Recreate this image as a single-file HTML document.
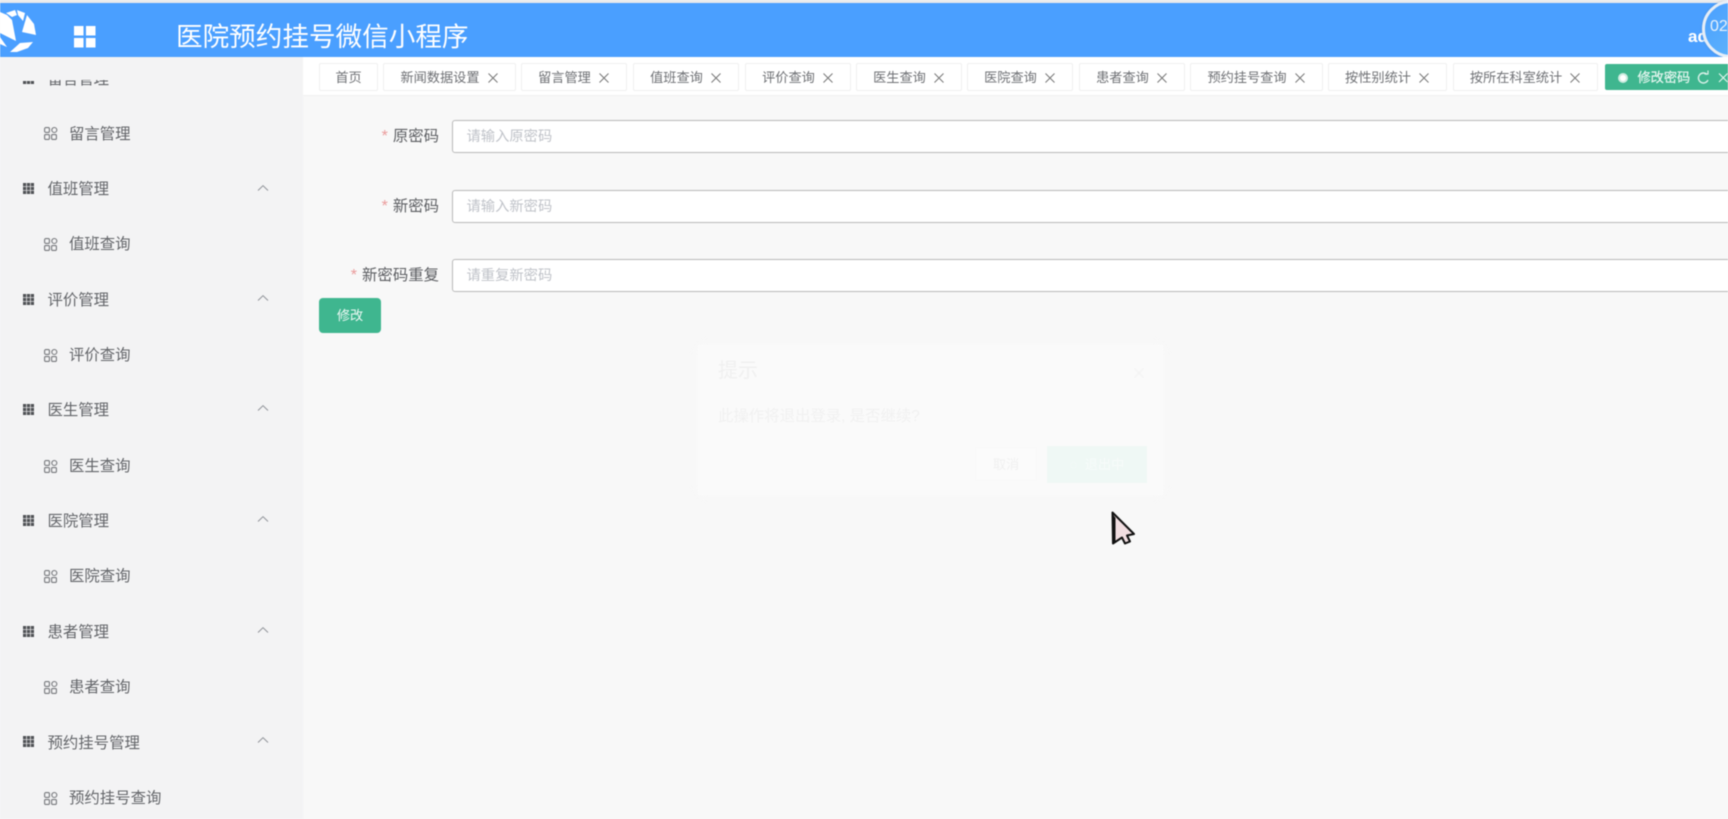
<!DOCTYPE html>
<html lang="zh"><head><meta charset="utf-8"><title>医院预约挂号微信小程序</title>
<style>
html,body{margin:0;padding:0;width:1728px;height:819px;overflow:hidden;background:#f8f8f8}
body{font-family:"Liberation Sans","Noto Sans CJK SC",sans-serif;color:#606266}
#r{position:absolute;left:0;top:0;width:1728px;height:819px;overflow:hidden;filter:blur(.4px)}
.a{position:absolute;white-space:nowrap}
.g,.s{position:absolute;font-size:15.4px;line-height:22px;white-space:nowrap;color:#636569}
.g{left:47.500px}.s{left:69px}
.tab{position:absolute;top:63px;height:26px;background:#fff;border:1px solid #f0f0f0;border-radius:2px;font-size:13.2px;line-height:28px;color:#6f7175;text-align:center;white-space:nowrap;box-sizing:content-box}
.tab i{font-style:normal;display:inline-block;width:12px;height:12px;margin-left:7px;vertical-align:-1.5px}
.tab span{position:relative;left:0}
.lb{position:absolute;font-size:15.4px;line-height:22px;color:#5c5e62;right:1289px;white-space:nowrap}
.lb b{font-weight:normal;color:#ea9a9a;margin-right:5px;font-size:16px;line-height:14px}
.in{position:absolute;left:452px;width:1290px;height:31px;background:#fff;border:1px solid #b9b9b9;border-radius:3px;font-size:14.3px;line-height:33px;color:#c0c3c9;padding-left:13.500px}
</style></head><body>
<div id="r">
<div class="a" style="left:0;top:0;width:1728px;height:3px;background:#e9eaec"></div>
<div class="a" style="left:0;top:57px;width:303px;height:762px;background:#f3f3f4"></div>

<div class="s" style="top:124px;">留言管理</div>
<div class="g" style="top:179px">值班管理</div><div class="s" style="top:234px">值班查询</div>
<div class="g" style="top:290px">评价管理</div><div class="s" style="top:345px">评价查询</div>
<div class="g" style="top:400px">医生管理</div><div class="s" style="top:456px">医生查询</div>
<div class="g" style="top:511px">医院管理</div><div class="s" style="top:566px">医院查询</div>
<div class="g" style="top:622px">患者管理</div><div class="s" style="top:677px">患者查询</div>
<div class="g" style="top:733px">预约挂号管理</div><div class="s" style="top:788px">预约挂号查询</div>
<div class="g" style="top:69px">留言管理</div>
<div class="a" style="left:0;top:57px;width:303px;height:23px;background:#f3f3f4"></div>

<svg class="a" style="left:0;top:0" width="303" height="819" fill="none">
<defs>
<g id="gi"><path fill="#505256" d="M0 0h3.200v3.200H0zM3.900 0h3.200v3.200H3.900zM7.800 0h3.200v3.200H7.800zM0 3.900h3.200v3.200H0zM3.900 3.900h3.200v3.200H3.900zM7.800 3.900h3.200v3.200H7.800zM0 7.800h3.200v3.200H0zM3.900 7.800h3.200v3.200H3.900zM7.800 7.800h3.200v3.200H7.800z"/></g>
<g id="si"><g stroke="#75777b" stroke-width="1.100"><rect x=".6" y=".6" width="4.800" height="4.800" rx="1.200"/><circle cx="10.300" cy="3" r="2.500"/><rect x=".6" y="7.600" width="4.800" height="4.800" rx="1"/><rect x="7.600" y="7.600" width="4.800" height="4.800" rx="1"/></g></g>
<path id="ch" d="M0 5.500L5 .7L10 5.500" stroke="#909399" stroke-width="1"/>
</defs>
<g fill="#505256"><path d="M23 81h3.200v3h-3.200zM26.900 81h3.200v3h-3.200zM30.800 81h3.200v3h-3.200z"/></g>
<use href="#si" x="44" y="127"/>
<use href="#gi" x="23" y="183"/><use href="#ch" x="258" y="185"/><use href="#si" x="44" y="238"/>
<use href="#gi" x="23" y="294"/><use href="#ch" x="258" y="295"/><use href="#si" x="44" y="349"/>
<use href="#gi" x="23" y="404"/><use href="#ch" x="258" y="405"/><use href="#si" x="44" y="460"/>
<use href="#gi" x="23" y="515"/><use href="#ch" x="258" y="516"/><use href="#si" x="44" y="570"/>
<use href="#gi" x="23" y="626"/><use href="#ch" x="258" y="627"/><use href="#si" x="44" y="681"/>
<use href="#gi" x="23" y="736"/><use href="#ch" x="258" y="737"/><use href="#si" x="44" y="792"/>
</svg>

<!-- header -->
<div class="a" style="left:0;top:3px;width:1728px;height:54px;background:#4a9fff"></div>
<svg class="a" style="left:0;top:0" width="100" height="57">
<g fill="#fff">
<path d="M6 13L15 10L17 15L12 17z"/>
<path d="M17 10L25 13L23 21L18 15z"/>
<path d="M0 12L7 15L12 20L16 41L8 37L0 33z"/>
<path d="M27 15L34 24L36 35L22 32z"/>
<path d="M10 52L20 43L33 42L28 48L17 52z"/>
<path d="M0 37L7 47L0 44z"/>
</g>
<g fill="#fff"><rect x="74" y="26" width="9.500" height="9.500"/><rect x="86" y="26" width="9.500" height="9.500"/><rect x="74" y="38" width="9.500" height="9.500"/><rect x="86" y="38" width="9.500" height="9.500"/></g>
</svg>
<div class="a" style="left:176px;top:18px;font-size:26.600px;line-height:38px;color:#fff">医院预约挂号微信小程序</div>
<div class="a" style="left:1688px;top:26px;font-size:17px;line-height:22px;color:#fff;font-weight:bold">ad</div>
<div class="a" style="left:1702px;top:0;width:58px;height:58px;box-sizing:border-box;border-radius:50%;border:3px solid #e6eef7;background:linear-gradient(135deg,#4a9fff,#62b8fb);box-shadow:0 0 2px rgba(90,110,130,.4)"></div>
<div class="a" style="left:1710px;top:16px;font-size:16px;line-height:22px;color:#e6f1fc">02</div>

<!-- tabs bar -->
<div class="a" style="left:303px;top:57px;width:1425px;height:39px;background:#fff;border-bottom:1px solid #f0f0f0;box-sizing:border-box"></div>
<div class="tab" style="left:319px;width:57px"><span>首页</span></div>
<div class="tab" style="left:383px;width:131px"><span>新闻数据设置</span><i><svg width="12" height="12"><path d="M1.500 1.500L10.500 10.500M10.500 1.500L1.500 10.500" stroke="#777" stroke-width="1"/></svg></i></div>
<div class="tab" style="left:521px;width:104px"><span>留言管理</span><i><svg width="12" height="12"><path d="M1.500 1.500L10.500 10.500M10.500 1.500L1.500 10.500" stroke="#777" stroke-width="1"/></svg></i></div>
<div class="tab" style="left:633px;width:104px"><span>值班查询</span><i><svg width="12" height="12"><path d="M1.500 1.500L10.500 10.500M10.500 1.500L1.500 10.500" stroke="#777" stroke-width="1"/></svg></i></div>
<div class="tab" style="left:745px;width:104px"><span>评价查询</span><i><svg width="12" height="12"><path d="M1.500 1.500L10.500 10.500M10.500 1.500L1.500 10.500" stroke="#777" stroke-width="1"/></svg></i></div>
<div class="tab" style="left:856px;width:104px"><span>医生查询</span><i><svg width="12" height="12"><path d="M1.500 1.500L10.500 10.500M10.500 1.500L1.500 10.500" stroke="#777" stroke-width="1"/></svg></i></div>
<div class="tab" style="left:967px;width:104px"><span>医院查询</span><i><svg width="12" height="12"><path d="M1.500 1.500L10.500 10.500M10.500 1.500L1.500 10.500" stroke="#777" stroke-width="1"/></svg></i></div>
<div class="tab" style="left:1079px;width:104px"><span>患者查询</span><i><svg width="12" height="12"><path d="M1.500 1.500L10.500 10.500M10.500 1.500L1.500 10.500" stroke="#777" stroke-width="1"/></svg></i></div>
<div class="tab" style="left:1190px;width:131px"><span>预约挂号查询</span><i><svg width="12" height="12"><path d="M1.500 1.500L10.500 10.500M10.500 1.500L1.500 10.500" stroke="#777" stroke-width="1"/></svg></i></div>
<div class="tab" style="left:1328px;width:117px"><span>按性别统计</span><i><svg width="12" height="12"><path d="M1.500 1.500L10.500 10.500M10.500 1.500L1.500 10.500" stroke="#777" stroke-width="1"/></svg></i></div>
<div class="tab" style="left:1453px;width:143px"><span>按所在科室统计</span><i><svg width="12" height="12"><path d="M1.500 1.500L10.500 10.500M10.500 1.500L1.500 10.500" stroke="#777" stroke-width="1"/></svg></i></div>
<div class="a" style="left:1605px;top:64px;width:130px;height:26px;background:#3fb68f;border-radius:2px"></div>
<svg class="a" style="left:1605px;top:64px" width="123" height="26" fill="none">
<circle cx="18" cy="14" r="5" fill="#cdebe0"/><circle cx="18" cy="14" r="3" fill="#fff"/>
<path d="M102 10.500A5 5 0 1 0 103 16" stroke="#d9f0e8" stroke-width="1.400"/><path d="M99.500 10h3.500v-3.500" stroke="#d9f0e8" stroke-width="1.200"/>
<path d="M114 9.500L122.500 18M122.500 9.500L114 18" stroke="#e6f6f0" stroke-width="1.100"/>
</svg>
<div class="a" style="left:1637.500px;top:65px;font-size:13.200px;line-height:26px;color:#e8f7f1;-webkit-text-stroke:.2px #e8f7f1">修改密码</div>

<!-- form -->
<div class="in" style="top:120px">请输入原密码</div>
<div class="in" style="top:190px">请输入新密码</div>
<div class="in" style="top:259px">请重复新密码</div>
<div class="lb" style="top:125.500px"><b>*</b>原密码</div>
<div class="lb" style="top:195.500px"><b>*</b>新密码</div>
<div class="lb" style="top:264.500px"><b>*</b>新密码重复</div>
<div class="a" style="left:319px;top:298px;width:62px;height:35px;background:#3fb68f;border-radius:4px;color:#eef9f5;font-size:13.200px;line-height:36px;text-align:center">修改</div>

<!-- fading dialog -->
<div class="a" style="left:698px;top:345px;width:465px;height:150px;background:#fafafa;box-shadow:0 0 10px rgba(250,250,250,.8)"></div>
<div class="a" style="left:718px;top:357px;font-size:20px;line-height:28px;color:#f0f0f0">提示</div>
<div class="a" style="left:718px;top:406px;font-size:15.400px;line-height:22px;color:#f1f1f1">此操作将退出登录, 是否继续?</div>
<svg class="a" style="left:1133px;top:367px" width="12" height="12"><path d="M1.500 1.500L10.500 10.500M10.500 1.500L1.500 10.500" stroke="#f2f2f2" stroke-width="1.100"/></svg>
<div class="a" style="left:975px;top:447px;width:60px;height:32px;border:1px solid #f8f8f8;background:#fbfbfb;font-size:13.200px;line-height:33px;text-align:center;color:#f0f0f0">取消</div>
<div class="a" style="left:1047px;top:446px;width:100px;height:37px;background:#eff8f5;font-size:13.200px;line-height:38px;color:#f7fbfa;text-align:center">◌&nbsp;&nbsp;退出中</div>

<!-- cursor -->
<svg class="a" style="left:1108px;top:508px" width="32" height="40">
<path d="M4.500 4.500L26 26L19 27.500L22 33.500L17 35.500L14 29.500L5 35.500z" fill="#f0dde0" stroke="#111" stroke-width="2" stroke-linejoin="round"/>
<path d="M4 5L4 35.500L7.500 34L7.500 10z" fill="#111"/>
</svg>
</div>
</body></html>
